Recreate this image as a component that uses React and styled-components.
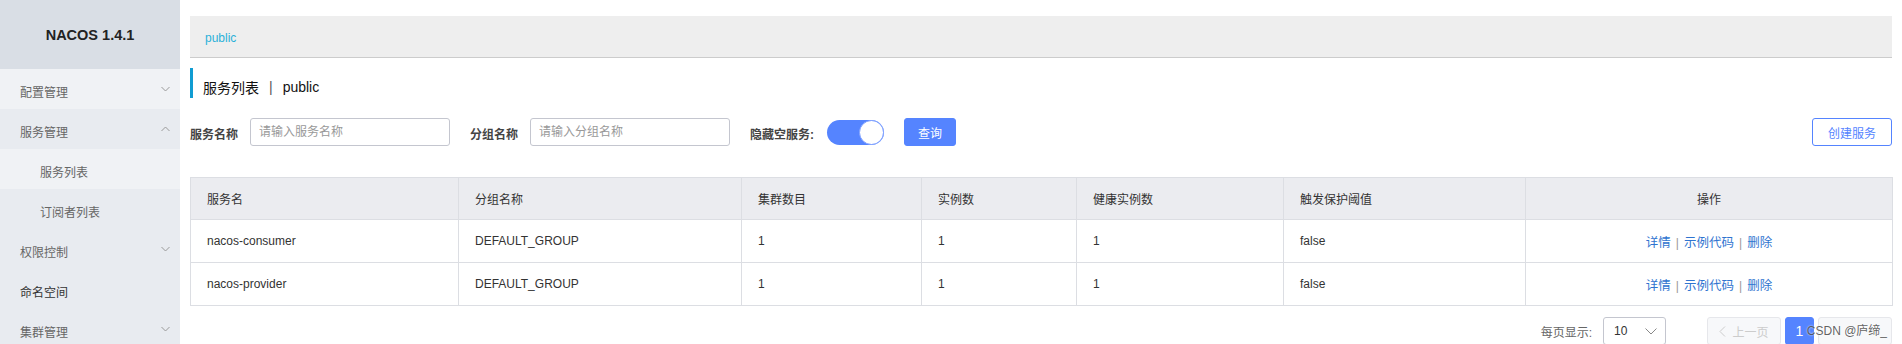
import React from "react";
import styled, { createGlobalStyle } from "styled-components";

const GlobalStyle = createGlobalStyle`
  * {
    box-sizing: border-box;
    margin: 0;
    padding: 0;
  }
  body {
    background: #fff;
    font-family: "Liberation Sans", "Noto Sans CJK SC", sans-serif;
    font-size: 12px;
    color: #333;
  }
`;

const Page = styled.div`
  position: relative;
  display: flex;
  min-height: 100vh;
  overflow: hidden;
`;

const Sidebar = styled.aside`
  width: 180px;
  flex-shrink: 0;
  background: #e8ebf0;
`;

const Brand = styled.div`
  height: 69px;
  display: flex;
  align-items: center;
  justify-content: center;
  background: #d9dee5;
  font-family: "Liberation Sans", sans-serif;
  font-size: 14.5px;
  font-weight: bold;
  color: #222;
`;

const MenuItem = styled.div`
  height: 40px;
  display: flex;
  align-items: center;
  justify-content: space-between;
  padding: 4px 10px 0 ${(p) => (p.sub ? "40px" : "20px")};
  background: ${(p) => (p.light ? "#f0f2f5" : "#e8ebf0")};
  color: ${(p) => (p.dark ? "#333" : "#666")};
  font-size: 12px;
`;

const Chevron = ({ up }) => (
  <svg width="9" height="6" viewBox="0 0 9 6" style={{ marginTop: -5 }}>
    <polyline
      points={up ? "0.5,5 4.5,1 8.5,5" : "0.5,1 4.5,5 8.5,1"}
      fill="none"
      stroke="#999"
      strokeWidth="1"
    />
  </svg>
);

const Main = styled.main`
  flex: 1;
  min-width: 0;
  padding: 16px 10px 0 10px;
`;

const Breadcrumb = styled.div`
  height: 42px;
  display: flex;
  align-items: center;
  padding: 3px 15px 0;
  background: #eee;
  border-bottom: 1px solid #ccc;
  color: #2bb1d9;
  font-size: 12px;
`;

const PageTitle = styled.div`
  margin-top: 10px;
  height: 30px;
  display: flex;
  align-items: center;
  padding: 8px 0 0 10px;
  border-left: 3px solid #109cd2;
  font-size: 14px;
  color: #111;
`;

const Sep = styled.span`
  margin: 0 10px;
  color: #555;
`;

const SearchRow = styled.div`
  margin-top: 20px;
  height: 28px;
  display: flex;
  align-items: center;
`;

const FormItem = styled.div`
  display: flex;
  align-items: center;
  margin-right: 20px;
`;

const Label = styled.span`
  font-weight: bold;
  color: #444;
  margin-right: ${(p) => p.gap || 12}px;
  padding-top: 2px;
`;

const Input = styled.input`
  width: 200px;
  height: 28px;
  border: 1px solid #c4c6cf;
  border-radius: 3px;
  padding: 0 8px;
  font-family: inherit;
  font-size: 12px;
  outline: none;
  &::placeholder {
    color: #999;
  }
`;

const Switch = styled.div`
  width: 57px;
  height: 25px;
  border-radius: 13px;
  background: #5584ff;
  display: flex;
  justify-content: flex-end;
`;

const Knob = styled.div`
  width: 25px;
  height: 25px;
  border-radius: 50%;
  background: #fff;
  border: 1px solid #7ea0ff;
`;

const Button = styled.button`
  height: 28px;
  padding: 0 ${(p) => (p.wide ? 15 : 13)}px;
  border-radius: 3px;
  font-family: inherit;
  font-size: 12px;
  cursor: pointer;
  border: 1px solid #5584ff;
  background: ${(p) => (p.primary ? "#5584ff" : "#fff")};
  color: ${(p) => (p.primary ? "#fff" : "#5584ff")};
`;

const Spacer = styled.div`
  flex: 1;
`;

const Table = styled.table`
  margin-top: 31px;
  width: 100%;
  table-layout: fixed;
  border-collapse: collapse;
  border: 1px solid #dcdee3;
`;

const Th = styled.th`
  height: 42px;
  padding: 0 16px;
  background: #ebecf0;
  border: 1px solid #dcdee3;
  font-weight: normal;
  color: #333;
  text-align: ${(p) => (p.center ? "center" : "left")};
`;

const Td = styled.td`
  height: 43px;
  padding: 0 16px;
  border: 1px solid #dcdee3;
  color: #333;
  text-align: ${(p) => (p.center ? "center" : "left")};
`;

const Link = styled.a`
  color: #2f74d0;
  text-decoration: none;
  font-size: 12.5px;
`;

const Pipe = styled.span`
  margin: 0 5px;
  color: #999;
`;

const Pagination = styled.div`
  margin-top: 11px;
  display: flex;
  align-items: center;
  justify-content: flex-end;
`;

const PageLabel = styled.span`
  color: #666;
  margin-right: 11px;
`;

const Select = styled.div`
  width: 63px;
  height: 28px;
  display: flex;
  align-items: center;
  justify-content: space-between;
  padding: 0 8px 0 10px;
  border: 1px solid #c4c6cf;
  border-radius: 3px;
  color: #333;
  margin-right: 41px;
`;

const PageBtn = styled.div`
  height: 28px;
  width: ${(p) => p.w}px;
  margin-left: ${(p) => p.ml || 0}px;
  display: flex;
  align-items: center;
  justify-content: center;
  gap: 6px;
  border-radius: 3px;
  border: 1px solid ${(p) => (p.active ? "#5584ff" : "#e6e7eb")};
  background: ${(p) => (p.active ? "#5584ff" : "#f7f8fa")};
  color: ${(p) => (p.active ? "#fff" : "#ccc")};
  font-size: ${(p) => (p.active ? 14 : 12)}px;
`;

const Watermark = styled.div`
  position: absolute;
  right: 15px;
  top: 321px;
  font-size: 12px;
  color: rgba(70, 70, 70, 0.85);
  text-shadow: 0 0 2px #fff;
  pointer-events: none;
`;

const Arrow = ({ color = "#ccc" }) => (
  <svg width="7" height="11" viewBox="0 0 7 11">
    <polyline points="6,0.5 1,5.5 6,10.5" fill="none" stroke={color} strokeWidth="1" />
  </svg>
);

const menu = [
  { label: "配置管理", chevron: "down", light: true },
  { label: "服务管理", chevron: "up" },
  { label: "服务列表", sub: true, light: true },
  { label: "订阅者列表", sub: true },
  { label: "权限控制", chevron: "down" },
  { label: "命名空间", dark: true },
  { label: "集群管理", chevron: "down" },
];

const columns = [
  { title: "服务名", w: 268 },
  { title: "分组名称", w: 283 },
  { title: "集群数目", w: 180 },
  { title: "实例数", w: 155 },
  { title: "健康实例数", w: 207 },
  { title: "触发保护阈值", w: 242 },
  { title: "操作", w: 367, center: true },
];

const rows = [
  ["nacos-consumer", "DEFAULT_GROUP", "1", "1", "1", "false"],
  ["nacos-provider", "DEFAULT_GROUP", "1", "1", "1", "false"],
];

export default function App() {
  return (
    <Page>
      <GlobalStyle />
      <Sidebar>
        <Brand>NACOS 1.4.1</Brand>
        {menu.map((m) => (
          <MenuItem key={m.label} sub={m.sub} light={m.light} dark={m.dark}>
            <span>{m.label}</span>
            {m.chevron && <Chevron up={m.chevron === "up"} />}
          </MenuItem>
        ))}
      </Sidebar>
      <Main>
        <Breadcrumb>public</Breadcrumb>
        <PageTitle>
          服务列表<Sep>|</Sep>public
        </PageTitle>
        <SearchRow>
          <FormItem>
            <Label>服务名称</Label>
            <Input placeholder="请输入服务名称" />
          </FormItem>
          <FormItem>
            <Label>分组名称</Label>
            <Input placeholder="请输入分组名称" />
          </FormItem>
          <FormItem>
            <Label gap={13}>隐藏空服务:</Label>
            <Switch>
              <Knob />
            </Switch>
          </FormItem>
          <Button primary>查询</Button>
          <Spacer />
          <Button wide>创建服务</Button>
        </SearchRow>
        <Table>
          <colgroup>
            {columns.map((c) => (
              <col key={c.title} style={{ width: c.w }} />
            ))}
          </colgroup>
          <thead>
            <tr>
              {columns.map((c) => (
                <Th key={c.title} center={c.center}>
                  {c.title}
                </Th>
              ))}
            </tr>
          </thead>
          <tbody>
            {rows.map((r) => (
              <tr key={r[0]}>
                {r.map((v, i) => (
                  <Td key={i}>{v}</Td>
                ))}
                <Td center>
                  <Link href="#">详情</Link>
                  <Pipe>|</Pipe>
                  <Link href="#">示例代码</Link>
                  <Pipe>|</Pipe>
                  <Link href="#">删除</Link>
                </Td>
              </tr>
            ))}
          </tbody>
        </Table>
        <Pagination>
          <PageLabel>每页显示:</PageLabel>
          <Select>
            <span>10</span>
            <svg width="12" height="7" viewBox="0 0 12 7">
              <polyline points="0.5,0.5 6,6 11.5,0.5" fill="none" stroke="#888" strokeWidth="1" />
            </svg>
          </Select>
          <PageBtn w={74}>
            <Arrow />
            <span>上一页</span>
          </PageBtn>
          <PageBtn w={29} ml={4} active>
            1
          </PageBtn>
          <PageBtn w={74} ml={4} />
        </Pagination>
      </Main>
      <Watermark>CSDN @庐缔_</Watermark>
    </Page>
  );
}
